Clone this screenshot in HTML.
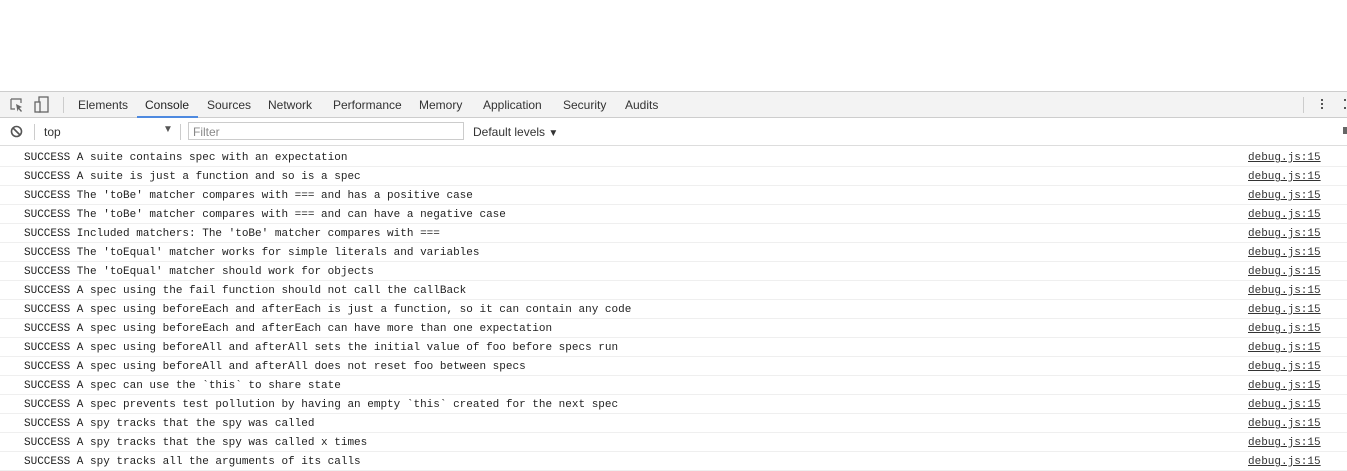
<!DOCTYPE html>
<html><head><style>
body{margin:0;width:1347px;height:459px;overflow:hidden;background:#fff;font-family:"Liberation Sans",sans-serif;position:relative}
.tb{position:absolute;left:0;top:91px;width:1347px;height:27px;background:#f3f3f3;border-top:1px solid #cdcdcd;border-bottom:1px solid #cdcdcd;box-sizing:border-box}
.tab{position:absolute;top:6px;font-size:12px;color:#333}
.fb{position:absolute;left:0;top:118px;width:1347px;height:28px;border-bottom:1px solid #ddd;box-sizing:border-box;background:#fff}
.row{position:absolute;left:0;width:1347px;height:19px;border-bottom:1px solid #efefef;box-sizing:border-box;font-family:"Liberation Mono",monospace;font-size:11px;color:#222}
.row .t{position:absolute;left:24px;top:4px;white-space:pre}
.row .l{position:absolute;left:1248px;top:4px;text-decoration:underline;color:#333}
</style></head><body>
<div class="tb">
<svg style="position:absolute;left:9px;top:5px" width="16" height="16" viewBox="0 0 16 16"><path d="M2 2h10v4M2 2v10h4" fill="none" stroke="#666" stroke-width="1.2"/><path d="M7 7l6 3-2.5 1 2.5 3-1 1-2.5-3-1 2.5z" fill="#666"/></svg>
<svg style="position:absolute;left:34px;top:4px" width="16" height="18" viewBox="0 0 16 18"><rect x="5" y="1" width="9" height="15" fill="none" stroke="#666" stroke-width="1.3"/><rect x="1" y="6" width="5" height="10" fill="#f3f3f3" stroke="#666" stroke-width="1.3"/></svg>
<div style="position:absolute;left:63px;top:5px;width:1px;height:16px;background:#ccc"></div>
<span class="tab" style="left:78px">Elements</span>
<span class="tab" style="left:145px;color:#222">Console</span>
<div style="position:absolute;left:137px;top:24px;width:61px;height:2px;background:#4e8ae0"></div>
<span class="tab" style="left:207px">Sources</span>
<span class="tab" style="left:268px">Network</span>
<span class="tab" style="left:333px">Performance</span>
<span class="tab" style="left:419px">Memory</span>
<span class="tab" style="left:483px">Application</span>
<span class="tab" style="left:563px">Security</span>
<span class="tab" style="left:625px">Audits</span>
<div style="position:absolute;left:1303px;top:5px;width:1px;height:16px;background:#ccc"></div>
<div style="position:absolute;left:1321px;top:7px;width:2px;height:2px;background:#555;box-shadow:0 4px #555,0 8px #555"></div>
<div style="position:absolute;left:1344px;top:7px;width:2px;height:2px;background:#555;box-shadow:0 8px #555"></div>
</div>
<div class="fb">
<svg style="position:absolute;left:10px;top:7px" width="13" height="13" viewBox="0 0 13 13"><circle cx="6.5" cy="6.5" r="5" fill="none" stroke="#555" stroke-width="1.6"/><path d="M3 3l7 7" stroke="#555" stroke-width="1.6"/></svg>
<div style="position:absolute;left:34px;top:6px;width:1px;height:16px;background:#ccc"></div>
<span style="position:absolute;left:44px;top:7px;font-size:12px;color:#333">top</span>
<span style="position:absolute;left:163px;top:6px;font-size:10px;color:#555">▼</span>
<div style="position:absolute;left:180px;top:6px;width:1px;height:16px;background:#ccc"></div>
<div style="position:absolute;left:188px;top:4px;width:276px;height:18px;border:1px solid #ccc;box-sizing:border-box"></div>
<span style="position:absolute;left:193px;top:7px;font-size:12px;color:#888">Filter</span>
<span style="position:absolute;left:473px;top:7px;font-size:12px;color:#333">Default levels <span style="font-size:10px">▼</span></span>
<div style="position:absolute;left:1343px;top:9px;width:4px;height:7px;background:#666"></div>
</div>
<div class="row" style="top:148px"><span class="t">SUCCESS A suite contains spec with an expectation</span><span class="l">debug.js:15</span></div>
<div class="row" style="top:167px"><span class="t">SUCCESS A suite is just a function and so is a spec</span><span class="l">debug.js:15</span></div>
<div class="row" style="top:186px"><span class="t">SUCCESS The 'toBe' matcher compares with === and has a positive case</span><span class="l">debug.js:15</span></div>
<div class="row" style="top:205px"><span class="t">SUCCESS The 'toBe' matcher compares with === and can have a negative case</span><span class="l">debug.js:15</span></div>
<div class="row" style="top:224px"><span class="t">SUCCESS Included matchers: The 'toBe' matcher compares with ===</span><span class="l">debug.js:15</span></div>
<div class="row" style="top:243px"><span class="t">SUCCESS The 'toEqual' matcher works for simple literals and variables</span><span class="l">debug.js:15</span></div>
<div class="row" style="top:262px"><span class="t">SUCCESS The 'toEqual' matcher should work for objects</span><span class="l">debug.js:15</span></div>
<div class="row" style="top:281px"><span class="t">SUCCESS A spec using the fail function should not call the callBack</span><span class="l">debug.js:15</span></div>
<div class="row" style="top:300px"><span class="t">SUCCESS A spec using beforeEach and afterEach is just a function, so it can contain any code</span><span class="l">debug.js:15</span></div>
<div class="row" style="top:319px"><span class="t">SUCCESS A spec using beforeEach and afterEach can have more than one expectation</span><span class="l">debug.js:15</span></div>
<div class="row" style="top:338px"><span class="t">SUCCESS A spec using beforeAll and afterAll sets the initial value of foo before specs run</span><span class="l">debug.js:15</span></div>
<div class="row" style="top:357px"><span class="t">SUCCESS A spec using beforeAll and afterAll does not reset foo between specs</span><span class="l">debug.js:15</span></div>
<div class="row" style="top:376px"><span class="t">SUCCESS A spec can use the `this` to share state</span><span class="l">debug.js:15</span></div>
<div class="row" style="top:395px"><span class="t">SUCCESS A spec prevents test pollution by having an empty `this` created for the next spec</span><span class="l">debug.js:15</span></div>
<div class="row" style="top:414px"><span class="t">SUCCESS A spy tracks that the spy was called</span><span class="l">debug.js:15</span></div>
<div class="row" style="top:433px"><span class="t">SUCCESS A spy tracks that the spy was called x times</span><span class="l">debug.js:15</span></div>
<div class="row" style="top:452px"><span class="t">SUCCESS A spy tracks all the arguments of its calls</span><span class="l">debug.js:15</span></div>
</body></html>
